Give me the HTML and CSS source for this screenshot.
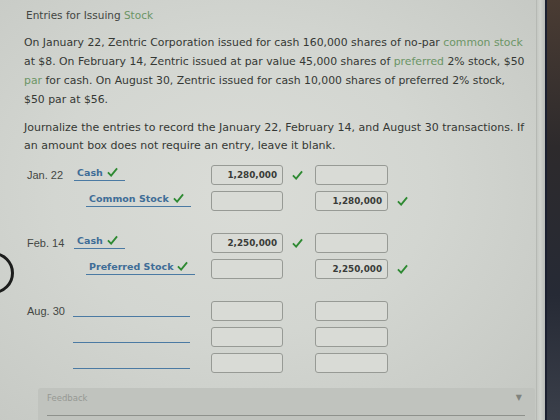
FILE: index.html
```html
<!DOCTYPE html>
<html lang="en">
<head>
  <meta charset="UTF-8" />
  <title>Entries for Issuing Stock</title>
  <link rel="stylesheet" href="styles.css">
</head>
<body>
  <div class="screen">
    <main class="page">
      <h1 class="title">Entries for Issuing <span class="term">Stock</span></h1>

      <p class="problem">
        On January 22, Zentric Corporation issued for cash 160,000 shares of no-par <span class="term">common stock</span><br>
        at $8. On February 14, Zentric issued at par value 45,000 shares of <span class="term">preferred</span> 2% stock, $50<br>
        <span class="term">par</span> for cash. On August 30, Zentric issued for cash 10,000 shares of preferred 2% stock,<br>
        $50 par at $56.
      </p>

      <p class="instructions">
        Journalize the entries to record the January 22, February 14, and August 30 transactions. If<br>
        an amount box does not require an entry, leave it blank.
      </p>

      <div class="journal">
        <div class="entry">
          <div class="line">
            <span class="date">Jan. 22</span>
            <span class="acct"><span class="pick">Cash <svg class="tick" viewBox="0 0 12 10"><path d="M1 5.5 L4.5 9 L11 1"/></svg></span></span>
            <span class="amount">1,280,000</span>
            <span class="mark"><svg class="tick" viewBox="0 0 12 10"><path d="M1 5.5 L4.5 9 L11 1"/></svg></span>
            <span class="amount"></span>
            <span class="mark"></span>
          </div>
          <div class="line">
            <span class="date"></span>
            <span class="acct credit"><span class="pick">Common Stock <svg class="tick" viewBox="0 0 12 10"><path d="M1 5.5 L4.5 9 L11 1"/></svg></span></span>
            <span class="amount"></span>
            <span class="mark"></span>
            <span class="amount">1,280,000</span>
            <span class="mark"><svg class="tick" viewBox="0 0 12 10"><path d="M1 5.5 L4.5 9 L11 1"/></svg></span>
          </div>
        </div>

        <div class="entry">
          <div class="line">
            <span class="date">Feb. 14</span>
            <span class="acct"><span class="pick">Cash <svg class="tick" viewBox="0 0 12 10"><path d="M1 5.5 L4.5 9 L11 1"/></svg></span></span>
            <span class="amount">2,250,000</span>
            <span class="mark"><svg class="tick" viewBox="0 0 12 10"><path d="M1 5.5 L4.5 9 L11 1"/></svg></span>
            <span class="amount"></span>
            <span class="mark"></span>
          </div>
          <div class="line">
            <span class="date"></span>
            <span class="acct credit"><span class="pick">Preferred Stock <svg class="tick" viewBox="0 0 12 10"><path d="M1 5.5 L4.5 9 L11 1"/></svg></span></span>
            <span class="amount"></span>
            <span class="mark"></span>
            <span class="amount">2,250,000</span>
            <span class="mark"><svg class="tick" viewBox="0 0 12 10"><path d="M1 5.5 L4.5 9 L11 1"/></svg></span>
          </div>
        </div>

        <div class="entry">
          <div class="line">
            <span class="date">Aug. 30</span>
            <span class="acct"><span class="pick empty"></span></span>
            <span class="amount"></span>
            <span class="mark"></span>
            <span class="amount"></span>
            <span class="mark"></span>
          </div>
          <div class="line">
            <span class="date"></span>
            <span class="acct"><span class="pick empty"></span></span>
            <span class="amount"></span>
            <span class="mark"></span>
            <span class="amount"></span>
            <span class="mark"></span>
          </div>
          <div class="line">
            <span class="date"></span>
            <span class="acct"><span class="pick empty"></span></span>
            <span class="amount"></span>
            <span class="mark"></span>
            <span class="amount"></span>
            <span class="mark"></span>
          </div>
        </div>
      </div>

      <div class="feedback">
        <span class="feedback-label">Feedback</span>
        <span class="caret">&#9660;</span>
      </div>
    </main>
    <div class="edge"></div>
    <div class="bezel"></div>
  </div>

  <div class="ring"></div>
</body>
</html>
```

FILE: styles.css
```css
* { margin: 0; padding: 0; box-sizing: border-box; }
html, body { height: 100%; overflow: hidden; }
body {
  font-family: 'DejaVu Sans', Verdana, sans-serif;
  color: #353834;
  background: #c9ccc7;
}

.screen {
  display: flex;
  height: 420px;
}
.page {
  flex: 1;
  padding: 8px 0 0 24px;
  background: radial-gradient(ellipse at 45% 45%, #dadcd7 0%, #d3d6d1 45%, #c4c7c2 100%);
}
.edge {
  width: 9px;
  background: linear-gradient(90deg, #c4c7c2, #d0d3ce 40%, #b9bcb8);
  border-left: 1px solid #b6b9b4;
}
.bezel {
  width: 15px;
  border-left: 2px solid #1b2030;
  background: linear-gradient(180deg, #4a3c33 0%, #2d2a2c 35%, #262a35 70%, #3a3f4a 100%);
}

.title {
  font-size: 10.5px;
  font-weight: normal;
  line-height: 14px;
  color: #434642;
  margin-left: 2px;
  margin-bottom: 12px;
}
.term { color: #6c9566; }

.problem {
  font-size: 10.85px;
  line-height: 18.9px;
  white-space: nowrap;
  margin-bottom: 9px;
}
.instructions {
  font-size: 11px;
  line-height: 18px;
  white-space: nowrap;
  margin-bottom: 10px;
}

.journal {
  display: flex;
  flex-direction: column;
  gap: 22px;
}
.entry {
  display: flex;
  flex-direction: column;
  gap: 6px;
}
.line {
  display: grid;
  grid-template-columns: 50px 137px 72px 32px 73px 24px;
  align-items: center;
  height: 20px;
}
.date {
  font-family: 'Liberation Sans', Arial, sans-serif;
  font-size: 11px;
  color: #444743;
  padding-left: 3px;
}
.acct { display: flex; align-items: center; }
.acct.credit { padding-left: 12px; }
.pick {
  display: inline-flex;
  align-items: center;
  gap: 4px;
  padding: 0 7px 1px 3px;
  margin-top: -3px;
  border-bottom: 1.5px solid #4b7aa3;
  color: #3f6d97;
  font-size: 9.5px;
  font-weight: bold;
  line-height: 13px;
}
.pick.empty {
  width: 117px;
  height: 14px;
  margin-top: -1px;
  margin-left: -1px;
}

.amount {
  height: 20px;
  border: 1px solid #979a95;
  border-radius: 3px;
  background: #d9dbd6;
  font-size: 8.8px;
  font-weight: bold;
  line-height: 18px;
  text-align: right;
  padding-right: 5px;
  color: #3a3c39;
}
.mark { padding-left: 9px; display: flex; }

.tick {
  width: 11px;
  height: 10px;
  fill: none;
  stroke: #2f8a33;
  stroke-width: 2;
}

.feedback {
  margin: 15px 0 0 14px;
  width: 497px;
  height: 40px;
  background: #c0c3be;
  border-radius: 3px 3px 0 0;
  padding: 5px 13px 0 9px;
  display: flex;
  justify-content: space-between;
  font-size: 8.5px;
  color: #969994;
  position: relative;
}
.feedback::after {
  content: "";
  position: absolute;
  left: 9px;
  right: 10px;
  top: 27px;
  border-top: 1px solid #8e918c;
}
.caret { font-size: 8px; color: #80837e; }

.ring {
  position: absolute;
  left: -28px;
  top: 252px;
  width: 42px;
  height: 42px;
  border: 3px solid #1c1d1c;
  border-radius: 50%;
}
```
